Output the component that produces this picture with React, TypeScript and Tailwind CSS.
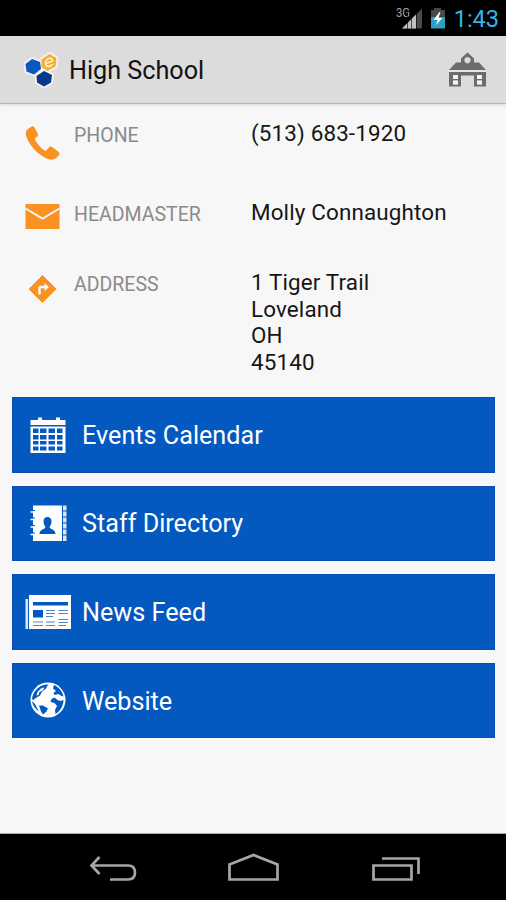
const ink = '#0359bf'

function StatusBar() {
  return (
    <div className="flex h-9 items-start justify-end bg-black">
      <svg className="h-9 w-[56px]" viewBox="394 0 56 36">
        <text x="396" y="17" fontSize="12" fill="#a0a0a0" fontFamily="Roboto, sans-serif" textLength="14" lengthAdjust="spacingAndGlyphs">3G</text>
        <path d="M402 28.5 L422 8.5 V28.5 Z" fill="#4a4a4a" />
        <path d="M402 28.5 L416 14.5 V28.5 Z" fill="#c0c0c0" />
        <path d="M407.5 10V29M411.5 10V29M416.5 9V29" stroke="#000" strokeWidth="1" opacity=".6" />
        <path d="M434 8h7v2h4v7h-14v-7h3z" fill="#484848" />
        <path d="M431 17h14v11.500h-14z" fill="#2d9fc5" />
        <path d="M439.500 12l-6 8h4l-1.500 5 6.500-7h-4l2-6z" fill="#fff" />
      </svg>
      <span className="mr-[7px] ml-[4px] text-[23.5px] leading-[38px] text-[#33b5e5]">1:43</span>
    </div>
  )
}

function Header() {
  return (
    <header className="flex h-[68px] items-center border-b border-[#b4b4b4] bg-[#dcdcdc] shadow-[0_1px_3px_rgba(0,0,0,0.12)]">
      <svg className="ml-5 h-[42px] w-[44px]" viewBox="20 48 44 42">
        <g stroke="#f3f1ed" strokeWidth="4" strokeLinejoin="round">
          <path d="M25.500 63l6.500-5 8 3 1 7-7 5.500-7.500-3z" fill="#0b56be" />
          <path d="M41.500 58.500l8-5.500 7 4-1 8.500-8 4.500-6-4z" fill="#f9ad32" />
          <path d="M36.500 75l7.500-5 8 4-1 7.500-7 4-7-4z" fill="#06388c" />
        </g>
        <path d="M25.500 63l6.500-5 8 3 1 7-7 5.500-7.500-3z" fill="#0b56be" />
        <path d="M41.500 58.500l8-5.500 7 4-1 8.500-8 4.500-6-4z" fill="#f9ad32" />
        <path d="M36.500 75l7.500-5 8 4-1 7.500-7 4-7-4z" fill="#06388c" />
        <path d="M46 62.500l6.500-2.500c0-3-3-3.500-5-1.800-3 2.500-2.500 7 .5 7.300 2 .2 3.500-1 4.500-2.500" fill="none" stroke="#fff0d0" strokeWidth="1.600" />
      </svg>
      <h1 className="mt-[2px] ml-[5px] text-[25.2px] text-[#111]">High School</h1>
      <svg className="mr-[19px] ml-auto h-[36px] w-[38px]" viewBox="449 52 38 36" fill="#6c6c6c">
        <path fillRule="evenodd" d="M467.500 52.500l6.500 6v4h5l7 7.500h-37l7-7.500h5v-4zM467.500 57a3.200 3.200 0 1 0 .01 0z" />
        <path fillRule="evenodd" d="M449 72h37v14.500h-12v-11h-13v11h-12zM453 75v4h5v-4zM453 80.500v4h5v-4zM477 75v4h5v-4zM477 80.500v4h5v-4z" />
        <path fill="#fff" opacity=".65" d="M453 75h5v4h-5zM453 80.500h5v4h-5zM477 75h5v4h-5zM477 80.500h5v4h-5zM449 70.500h37v1h-37z" />
      </svg>
    </header>
  )
}

function PhoneIcon() {
  return (
    <svg className="h-9 w-[35px]" viewBox="0 0 35 36" fill="#fb9122">
      <path d="M7 1.500C3 3 .3 6 .8 9.500 3 20 15 32 25 34.500c4 .8 7-1.500 9-4.500.8-1.200.5-2.500-.6-3.300l-6-4.500c-1.200-.9-2.600-.8-3.600.3l-2 2.500c-1 1-2 .7-3 0-3-2-7-7-8.500-9.500-.6-1-.4-2 .4-2.700l1.500-1.300c1-.9 1.200-2 .5-3L9.200 2C8.600 1.200 7.800 1.100 7 1.500z" />
    </svg>
  )
}

function MailIcon() {
  return (
    <svg className="-mt-px h-[27px] w-[35px]" viewBox="0 0 35 27">
      <path d="M.5 1h34v25H.5z" fill="#fb9122" />
      <path d="M.5 5.500L17.500 15.500 34.500 5.500" fill="none" stroke="#f7f7f7" strokeWidth="2" />
    </svg>
  )
}

function DirectionsIcon() {
  return (
    <svg className="h-[30px] w-[35px]" viewBox="0 0 35 30">
      <path d="M17.500 1.500L31 15 17.500 28.500 4 15z" fill="#fb9122" stroke="#fb9122" strokeLinejoin="round" />
      <path d="M14.500 20.500v-6.500q0-1 1-1h5" fill="none" stroke="#f7f7f7" strokeWidth="2.500" />
      <path d="M19.500 9l4.500 4-4.500 4z" fill="#f7f7f7" />
    </svg>
  )
}

function CalendarIcon() {
  return (
    <svg className="h-9 w-9" viewBox="0 0 36 36" fill="#fff">
      <path d="M.5 3H8V.5h4V3h14V.5h4V3h5.500v5H.5z" />
      <path
        fillRule="evenodd"
        d="M.5 9.500h35V36H.5zM3 11.500V16h5.500v-4.500zM10 11.500V16h6.500v-4.500zM18.500 11.500V16H25v-4.500zM27 11.500V16h5.500v-4.500zM3 18v4.500h5.500V18zM10 18v4.500h6.500V18zM18.500 18v4.500H25V18zM27 18v4.500h5.500V18zM3 24v3.500h5.500V24zM10 24v3.500h6.500V24zM18.500 24v3.500H25V24zM27 24v3.500h5.500V24zM3 29.500v4h5.500v-4zM10 29.500v4h6.500v-4zM18.500 29.500v4H25v-4zM27 29.500v4h5.500v-4z"
      />
    </svg>
  )
}

function DirectoryIcon() {
  return (
    <svg className="ml-[2px] h-9 w-[37px]" viewBox="0 0 37 36">
      <path d="M3 .5h29V36H3z" fill="#fff" />
      <path d="M.5 7H5M.5 14.500H5M.5 22H5M.5 29.500H5" stroke="#fff" strokeWidth="1.500" />
      <path d="M3 5.500h2M3 13h2M3 20.500h2M3 28h2" stroke={ink} strokeWidth="1" />
      <path d="M33 .5h3.500V36H33z" fill="#dbe7f5" />
      <path d="M32.500 0v36M33 6h4M33 12h4M33 18h4M33 24h4M33 30h4" stroke={ink} strokeWidth="1" />
      <path d="M13.500 16.500c0-3 1.500-4.500 4-4.500s4 1.500 4 4.500c0 2.500-1 4-2 5.500.4 2.500 6 2 6 7h-16c0-5 5.600-4.500 6-7-1-1.500-2-3-2-5.500z" fill={ink} />
    </svg>
  )
}

function NewsIcon() {
  return (
    <svg className="h-9 w-[46px]" viewBox="0 0 46 36">
      <path d="M.5 5H3v30H.500z" fill="#dbe7f5" />
      <path d="M4 1h42v34H4z" fill="#fff" />
      <path d="M8 8h35v3.500H8zM8 16h10v7.500H8z" fill={ink} />
      <path d="M21 16.500h9M21 19.500h9M21 22.500h7M33.500 16.500H43M33.500 19.500H43M33.500 25.500H43M21 28h9M8 28h10M33.500 28.500H43M8 31.500h10M21 31.500h9M33.500 31.500H41" stroke="#4f85c9" strokeWidth="1.200" />
    </svg>
  )
}

function WebsiteIcon() {
  return (
    <svg className="-mt-px h-9 w-9" viewBox="0 0 36 36">
      <circle cx="18" cy="18" r="17.500" fill="#fff" />
      <g fill={ink}>
        <path d="M2 16c1-5 4-9 8-11.500 3-1.500 5-2 8-2l-2 4-4 3-2 4-5 3-2 2z" />
        <path d="M24 3c5 2 8.500 6.500 9.500 11.500l-2-.5-3-2-4 1-1-2 2.500-2-3-2.500z" />
        <path d="M21.500 17l3-1.500 3 2.500 3 1 3-1c0 6-3.500 11.500-8 14l-.5-4 2-4-2.500-3-4-1z" />
        <path d="M9 23.500l4 0 5 3-2 3.500-3 2.500-2-3z" />
        <path d="M2 19l3 3 2 4 2 3.500C5 27 2.500 23 2 19z" />
      </g>
      <path d="M7.500 10l4-4 3-.5-2 3-3 1.500-1 3-2 .5z" fill="#fff" />
    </svg>
  )
}

const details = [
  { icon: PhoneIcon, label: 'PHONE', lines: ['(513) 683-1920'], height: 'h-[79px]' },
  { icon: MailIcon, label: 'HEADMASTER', lines: ['Molly Connaughton'], height: 'h-[70px]' },
  { icon: DirectionsIcon, label: 'ADDRESS', lines: ['1 Tiger Trail', 'Loveland', 'OH', '45140'], height: 'h-[127px]' },
]

const links = [
  { icon: CalendarIcon, title: 'Events Calendar' },
  { icon: DirectoryIcon, title: 'Staff Directory' },
  { icon: NewsIcon, title: 'News Feed' },
  { icon: WebsiteIcon, title: 'Website' },
]

function NavBar() {
  return (
    <nav className="h-[67px] border-t border-[#aaa] bg-black">
      <svg className="h-[66px] w-[506px]" viewBox="0 834 506 66" fill="none" stroke="#a6a6a6" strokeWidth="2.700">
        <path d="M99.500 857l-8 8.500 8 8.500M92 865.500h36q7 0 7 7t-7 7h-18" />
        <path d="M229.500 864.500l24-9.500 24 9.500V879.500h-48z" />
        <path d="M373.500 865.500h38v14h-38zM382 858.500h36.500V874" />
      </svg>
    </nav>
  )
}

export default function App() {
  return (
    <div className="flex h-[900px] w-[506px] flex-col overflow-hidden bg-[#f7f7f7] font-['Roboto',sans-serif]">
      <StatusBar />
      <Header />
      <main className="flex-1 pt-[17px]">
        {details.map((item) => (
          <div key={item.label} className={`flex pl-[25px] ${item.height}`}>
            <div className="w-[49px] pt-1">
              <item.icon />
            </div>
            <div className="w-[177px] text-[19.5px] leading-[29px] text-[#8a8a8a]">
              <span>{item.label}</span>
            </div>
            <div className="-mt-px text-[22.4px] leading-[26.7px] tracking-[0.15px] text-[#161616]">
              {item.lines.map((line) => (
                <div key={line}>
                  <span>{line}</span>
                </div>
              ))}
            </div>
          </div>
        ))}
        <div className="flex flex-col gap-[13px] pr-[11px] pl-3">
          {links.map((link) => (
            <button
              key={link.title}
              className="flex h-[75.6px] items-center border border-[#0b4eb2] bg-[#0359bf] text-white"
            >
              <span className="flex w-[69px] justify-center">
                <link.icon />
              </span>
              <span className="mt-[2px] text-[25.2px]">{link.title}</span>
            </button>
          ))}
        </div>
      </main>
      <NavBar />
    </div>
  )
}
